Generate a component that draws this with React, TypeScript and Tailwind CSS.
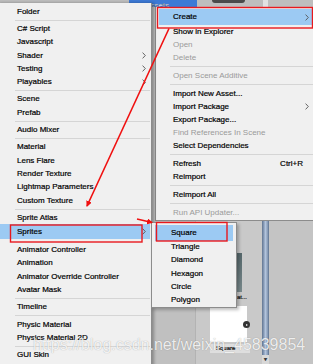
import React from "react";

type Item = {
  label?: string;
  sep?: boolean;
  arrow?: boolean;
  hl?: boolean;
  off?: boolean;
  keys?: string;
};

const leftItems: Item[] = [
  { label: "Folder" },
  { sep: true },
  { label: "C# Script" },
  { label: "Javascript" },
  { label: "Shader", arrow: true },
  { label: "Testing", arrow: true },
  { label: "Playables", arrow: true },
  { sep: true },
  { label: "Scene" },
  { label: "Prefab" },
  { sep: true },
  { label: "Audio Mixer" },
  { sep: true },
  { label: "Material" },
  { label: "Lens Flare" },
  { label: "Render Texture" },
  { label: "Lightmap Parameters" },
  { label: "Custom Texture" },
  { sep: true },
  { label: "Sprite Atlas" },
  { label: "Sprites", arrow: true, hl: true },
  { label: "Animator Controller" },
  { label: "Animation" },
  { label: "Animator Override Controller" },
  { label: "Avatar Mask" },
  { sep: true },
  { label: "Timeline" },
  { sep: true },
  { label: "Physic Material" },
  { label: "Physics Material 2D" },
  { sep: true },
  { label: "GUI Skin" },
];

const rightItems: Item[] = [
  { label: "Create", arrow: true, hl: true },
  { label: "Show in Explorer" },
  { label: "Open", off: true },
  { label: "Delete", off: true },
  { sep: true },
  { label: "Open Scene Additive", off: true },
  { sep: true },
  { label: "Import New Asset..." },
  { label: "Import Package", arrow: true },
  { label: "Export Package..." },
  { label: "Find References In Scene", off: true },
  { label: "Select Dependencies" },
  { sep: true },
  { label: "Refresh", keys: "Ctrl+R" },
  { label: "Reimport" },
  { sep: true },
  { label: "Reimport All" },
  { sep: true },
  { label: "Run API Updater...", off: true },
];

const spriteItems: Item[] = [
  { label: "Square", hl: true },
  { label: "Triangle" },
  { label: "Diamond" },
  { label: "Hexagon" },
  { label: "Circle" },
  { label: "Polygon" },
];

function Chevron() {
  return (
    <svg width="4" height="7" viewBox="0 0 4 7" className="shrink-0">
      <path d="M0.6 0.6 L3.3 3.5 L0.6 6.4" stroke="#555" strokeWidth="0.9" fill="none" />
    </svg>
  );
}

function LeftMenu() {
  return (
    <div className="absolute left-[-3px] top-[3px] w-[155px] h-[380px] bg-[#f0f0f0] border-r border-[#8c8c8c] shadow-[2px_0_3px_rgba(0,0,0,0.3)] pt-[2px]">
      {leftItems.map((it, i) =>
        it.sep ? (
          <div key={i} className="h-[4px] flex items-center pl-[18px] pr-[1px]">
            <div className="h-px w-full bg-[#d5d5d5]" />
          </div>
        ) : it.hl ? (
          <div key={i} className="h-[15px] mb-[4px] ml-[3px] mr-[1px] bg-[#9ccaf3] flex items-center justify-between pl-[17px] pr-[4px]">
            <span>{it.label}</span>
            {it.arrow && <Chevron />}
          </div>
        ) : (
          <div key={i} className="h-[13.3px] flex items-center justify-between pl-[20px] pr-[5px]">
            <span>{it.label}</span>
            {it.arrow && <Chevron />}
          </div>
        )
      )}
    </div>
  );
}

function RightMenu() {
  return (
    <div className="absolute left-[155px] top-[7px] w-[165px] h-[214px] bg-[#f0f0f0] border-l border-b border-[#8c8c8c] pt-[2px]">
      {rightItems.map((it, i) =>
        it.sep ? (
          <div key={i} className="h-[5px] flex items-center pl-[14px]">
            <div className="h-px w-full bg-[#d5d5d5]" />
          </div>
        ) : it.hl ? (
          <div key={i} className="h-[16px] ml-[3px] bg-[#9ccaf3] flex items-center justify-between pl-[14px] pr-[11px]">
            <span>{it.label}</span>
            {it.arrow && <Chevron />}
          </div>
        ) : (
          <div
            key={i}
            className={
              it.off
                ? "h-[13px] flex items-center justify-between pl-[17px] pr-[11px] text-[#9a9a9a] [-webkit-text-stroke:0px]"
                : "h-[13px] flex items-center justify-between pl-[17px] pr-[11px]"
            }
          >
            <span>{it.label}</span>
            {it.arrow && <Chevron />}
            {it.keys && <span className="mr-[6px]">{it.keys}</span>}
          </div>
        )
      )}
    </div>
  );
}

function SpriteMenu() {
  return (
    <div className="absolute left-[151px] top-[222px] w-[86px] h-[86px] bg-[#f0f0f0] border border-[#8c8c8c] shadow-[2px_2px_3px_rgba(0,0,0,0.25)] pt-[2px]">
      {spriteItems.map((it, i) =>
        it.hl ? (
          <div key={i} className="h-[15.5px] mx-[3px] bg-[#9ccaf3] flex items-center pl-[16px]">
            <span>{it.label}</span>
          </div>
        ) : (
          <div key={i} className="h-[13.3px] flex items-center pl-[19px]">
            <span>{it.label}</span>
          </div>
        )
      )}
    </div>
  );
}

function Background() {
  return (
    <div className="flex flex-col w-full h-full">
      <div className="h-[7px] flex bg-[#bebebe]">
        <div className="w-[129px]" />
        <div className="w-[68px] bg-[#3d7ad6] flex items-end overflow-hidden">
          <div className="flex items-center gap-[3px] pl-[4px] translate-y-[3px] text-white text-[8px] leading-none">
            <div className="w-[9px] h-[7px] bg-[#c7d6ea] rounded-[1px]" />
            <span>Assets</span>
          </div>
        </div>
        <div className="w-[15px]" />
        <div className="w-[33px] h-[3px] bg-[#4a4a4a] rounded-b-[3px]" />
        <div className="w-[18px]" />
        <div className="w-[5px] bg-[#e2e2e2]" />
        <div className="flex-1" />
      </div>
      <div className="flex-1 flex">
        <div className="w-[195px] bg-[#c0c0c0]" />
        <div className="w-[67px] bg-[#c9c9c9] border-l border-[#b3b3b3] flex flex-col pl-[14px]">
          <div className="mt-[246px] ml-[-4px] w-[36px] h-[39px] bg-gradient-to-b from-[#56686c] to-[#7a8a8d]" />
          <div className="h-[14px] text-[6px] leading-[10px] text-[#222] pl-[27px]">at...</div>
          <div className="relative w-[37px] h-[36px] bg-white">
            <div className="absolute right-[-3px] top-[15px] w-[7px] h-[7px] rounded-full bg-[#333] flex items-center justify-center">
              <div className="w-0 h-0 border-y-[1.5px] border-y-transparent border-l-[2.5px] border-l-white ml-[1px]" />
            </div>
          </div>
          <div className="mt-[2px] w-[40px] h-[9px] bg-[#dedede] text-[6px] leading-[9px] text-[#222] pl-[6px]">Square</div>
        </div>
        <div className="w-[7px] flex flex-col">
          <div className="flex-1 bg-gradient-to-r from-[#7589a6] via-[#b3c4dc] to-[#8094b0] border-x border-[#6b7f9b]" />
          <div className="h-[9px] bg-[#d8d8d8] text-[5px] leading-[9px] text-center text-[#333]">▼</div>
        </div>
        <div className="flex-1 bg-[#c4c4c4]" />
      </div>
    </div>
  );
}

function Annotations() {
  return (
    <svg className="absolute inset-0 pointer-events-none" width="313" height="364" viewBox="0 0 313 364">
      <defs>
        <marker id="ah" markerWidth="6" markerHeight="6" refX="5" refY="3" orient="auto" markerUnits="userSpaceOnUse">
          <path d="M0 0 L6 3 L0 6 Z" fill="#f01010" />
        </marker>
      </defs>
      <rect x="157.5" y="7.5" width="155" height="20.5" fill="none" stroke="#e8191e" strokeWidth="1.4" />
      <rect x="10.5" y="225" width="131.5" height="17" fill="none" stroke="#e8191e" strokeWidth="1.4" />
      <rect x="156.5" y="222.5" width="70.5" height="18.5" fill="none" stroke="#e8191e" strokeWidth="1.4" />
      <line x1="169" y1="28.5" x2="87" y2="206" stroke="#f01010" strokeWidth="1.6" markerEnd="url(#ah)" />
      <line x1="137" y1="219" x2="152" y2="222.5" stroke="#f01010" strokeWidth="1.6" markerEnd="url(#ah)" />
    </svg>
  );
}

export default function App() {
  return (
    <div className="relative w-[313px] h-[364px] overflow-hidden bg-[#c2c2c2] font-['Liberation_Sans',Arial,sans-serif] text-[8px] leading-none text-black [-webkit-text-stroke:0.2px_black]">
      <Background />
      <RightMenu />
      <LeftMenu />
      <SpriteMenu />
      <Annotations />
      <div className="absolute left-[33px] top-[336px] text-[16px] leading-[18px] text-white/85 [-webkit-text-stroke:0px] [text-shadow:0_0_1px_rgba(0,0,0,0.35)] whitespace-nowrap pointer-events-none">
        https://blog.csdn.net/weixin_45839854
      </div>
    </div>
  );
}
